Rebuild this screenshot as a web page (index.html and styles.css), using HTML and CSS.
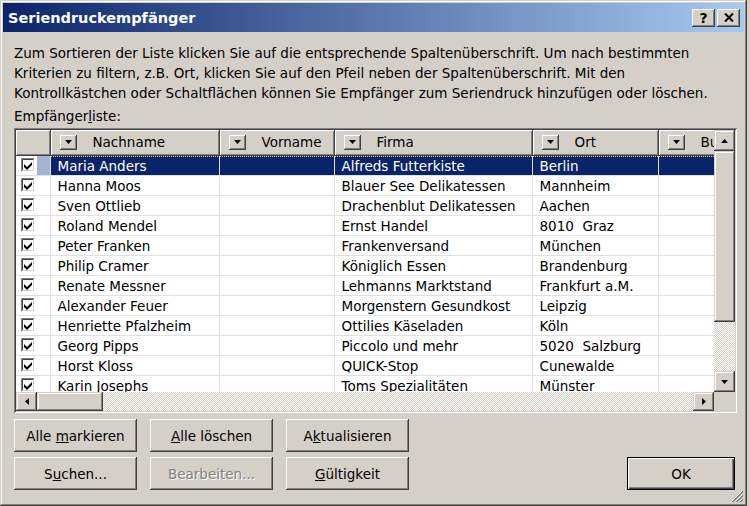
FILE: index.html
```html
<!DOCTYPE html>
<html lang="de">
<head>
  <meta charset="UTF-8">
  <meta name="viewport" content="width=device-width, initial-scale=1.0">
  <title>Seriendruckempfänger</title>
  <link rel="stylesheet" href="styles.css">
</head>
<body>
  <svg class="defs" width="0" height="0" aria-hidden="true">
    <symbol id="check" viewBox="0 0 14 14">
      <rect width="14" height="14" fill="#fff"/>
      <path d="M0.5 13.5V0.5H13.5" fill="none" stroke="#808080"/>
      <path d="M1.5 12.5V1.5H12.5" fill="none" stroke="#404040"/>
      <path d="M0.5 13.5H13.5V0.5" fill="none" stroke="#fff"/>
      <path d="M1.5 12.5H12.5V1.5" fill="none" stroke="#d4d0c8"/>
      <path d="M3 6l3 3l5-5v3l-5 5l-3-3z" fill="#000"/>
    </symbol>
    <symbol id="down" viewBox="0 0 7 4"><path d="M0 0h7l-3.5 4z" fill="#000"/></symbol>
    <symbol id="up" viewBox="0 0 7 4"><path d="M0 4h7l-3.5-4z" fill="#000"/></symbol>
    <symbol id="left" viewBox="0 0 4 7"><path d="M4 0v7l-4-3.5z" fill="#000"/></symbol>
    <symbol id="right" viewBox="0 0 4 7"><path d="M0 0v7l4-3.5z" fill="#000"/></symbol>
  </svg>

  <div class="window">
    <div class="titlebar">
      <span class="title">Seriendruckempfänger</span>
      <div class="caption-buttons">
        <button class="caption-btn">?</button>
        <button class="caption-btn">
          <svg width="10" height="9" viewBox="0 0 10 9"><path d="M1 0.5l8 8M9 0.5l-8 8" stroke="#000" stroke-width="2"/></svg>
        </button>
      </div>
    </div>

    <div class="dialog-body">
      <p class="intro">Zum Sortieren der Liste klicken Sie auf die entsprechende Spaltenüberschrift. Um nach bestimmten<br>Kriterien zu filtern, z.B. Ort, klicken Sie auf den Pfeil neben der Spaltenüberschrift. Mit den<br>Kontrollkästchen oder Schaltflächen können Sie Empfänger zum Seriendruck hinzufügen oder löschen.</p>
      <div class="list-label">Empfänger<u>l</u>iste:</div>

      <div class="listview">
        <div class="list-grid">
          <table class="recipients">
            <colgroup>
              <col class="c-check"><col class="c-name"><col class="c-first"><col class="c-company"><col class="c-city"><col class="c-state">
            </colgroup>
            <thead>
              <tr>
                <th></th>
                <th><div class="head"><span class="drop"><svg width="7" height="4"><use href="#down"/></svg></span>Nachname</div></th>
                <th><div class="head"><span class="drop"><svg width="7" height="4"><use href="#down"/></svg></span>Vorname</div></th>
                <th><div class="head"><span class="drop"><svg width="7" height="4"><use href="#down"/></svg></span>Firma</div></th>
                <th><div class="head"><span class="drop"><svg width="7" height="4"><use href="#down"/></svg></span>Ort</div></th>
                <th><div class="head"><span class="drop"><svg width="7" height="4"><use href="#down"/></svg></span>Bu</div></th>
              </tr>
            </thead>
            <tbody>
              <tr class="selected">
                <td class="check"><svg width="14" height="14"><use href="#check"/></svg></td>
                <td>Maria Anders</td><td></td><td>Alfreds Futterkiste</td><td>Berlin</td><td></td>
              </tr>
              <tr>
                <td class="check"><svg width="14" height="14"><use href="#check"/></svg></td>
                <td>Hanna Moos</td><td></td><td>Blauer See Delikatessen</td><td>Mannheim</td><td></td>
              </tr>
              <tr>
                <td class="check"><svg width="14" height="14"><use href="#check"/></svg></td>
                <td>Sven Ottlieb</td><td></td><td>Drachenblut Delikatessen</td><td>Aachen</td><td></td>
              </tr>
              <tr>
                <td class="check"><svg width="14" height="14"><use href="#check"/></svg></td>
                <td>Roland Mendel</td><td></td><td>Ernst Handel</td><td>8010&nbsp; Graz</td><td></td>
              </tr>
              <tr>
                <td class="check"><svg width="14" height="14"><use href="#check"/></svg></td>
                <td>Peter Franken</td><td></td><td>Frankenversand</td><td>München</td><td></td>
              </tr>
              <tr>
                <td class="check"><svg width="14" height="14"><use href="#check"/></svg></td>
                <td>Philip Cramer</td><td></td><td>Königlich Essen</td><td>Brandenburg</td><td></td>
              </tr>
              <tr>
                <td class="check"><svg width="14" height="14"><use href="#check"/></svg></td>
                <td>Renate Messner</td><td></td><td>Lehmanns Marktstand</td><td>Frankfurt a.M.</td><td></td>
              </tr>
              <tr>
                <td class="check"><svg width="14" height="14"><use href="#check"/></svg></td>
                <td>Alexander Feuer</td><td></td><td>Morgenstern Gesundkost</td><td>Leipzig</td><td></td>
              </tr>
              <tr>
                <td class="check"><svg width="14" height="14"><use href="#check"/></svg></td>
                <td>Henriette Pfalzheim</td><td></td><td>Ottilies Käseladen</td><td>Köln</td><td></td>
              </tr>
              <tr>
                <td class="check"><svg width="14" height="14"><use href="#check"/></svg></td>
                <td>Georg Pipps</td><td></td><td>Piccolo und mehr</td><td>5020&nbsp; Salzburg</td><td></td>
              </tr>
              <tr>
                <td class="check"><svg width="14" height="14"><use href="#check"/></svg></td>
                <td>Horst Kloss</td><td></td><td>QUICK-Stop</td><td>Cunewalde</td><td></td>
              </tr>
              <tr>
                <td class="check"><svg width="14" height="14"><use href="#check"/></svg></td>
                <td>Karin Josephs</td><td></td><td>Toms Spezialitäten</td><td>Münster</td><td></td>
              </tr>
            </tbody>
          </table>
        </div>

        <div class="vscroll">
          <div class="sb-btn"><svg width="7" height="4"><use href="#up"/></svg></div>
          <div class="sb-thumb v"></div>
          <div class="sb-track"></div>
          <div class="sb-btn"><svg width="7" height="4"><use href="#down"/></svg></div>
        </div>

        <div class="hscroll">
          <div class="sb-btn"><svg width="4" height="7"><use href="#left"/></svg></div>
          <div class="sb-thumb h"></div>
          <div class="sb-track"></div>
          <div class="sb-btn"><svg width="4" height="7"><use href="#right"/></svg></div>
        </div>
        <div class="corner"></div>
      </div>

      <div class="actions">
        <div class="button-grid">
          <button class="btn">Alle <u>m</u>arkieren</button>
          <button class="btn"><u>A</u>lle löschen</button>
          <button class="btn">A<u>k</u>tualisieren</button>
          <button class="btn">S<u>u</u>chen...</button>
          <button class="btn" disabled>Bearbeiten...</button>
          <button class="btn"><u>G</u>ültigkeit</button>
        </div>
        <button class="btn default">OK</button>
      </div>
    </div>

    <svg class="grip" width="12" height="12" viewBox="0 0 12 12">
      <path d="M11 1L1 11M11 5L5 11M11 9L9 11" stroke="#fff"/>
      <path d="M12 1L1 12M12 2L2 12M12 5L5 12M12 6L6 12M12 9L9 12M12 10L10 12" stroke="#808080"/>
    </svg>
  </div>
</body>
</html>
```

FILE: styles.css
```css
* {
  box-sizing: border-box;
}

body {
  margin: 0;
  background: #d4d0c8;
  font-family: "DejaVu Sans", Tahoma, sans-serif;
  font-size: 13.5px;
  color: #000;
}

.defs {
  position: absolute;
}

button {
  font: inherit;
  color: inherit;
}

.window {
  position: relative;
  display: flex;
  flex-direction: column;
  width: 747px;
  height: 506px;
  padding: 3px 3px 4px 3px;
  background: #d4d0c8;
  box-shadow: inset -1px -1px #404040, inset 1px 1px #d4d0c8,
    inset -2px -2px #808080, inset 2px 2px #fff;
}

/* title bar */
.titlebar {
  display: flex;
  align-items: center;
  height: 29px;
  padding: 0 4px 0 5px;
  background: linear-gradient(to right, #0a246a, #a6caf0);
}

.title {
  flex: 1;
  color: #fff;
  font-weight: bold;
  font-size: 14.5px;
}

.caption-buttons {
  display: flex;
  gap: 2px;
}

.caption-btn {
  display: grid;
  place-items: center;
  width: 23px;
  height: 18px;
  padding: 0;
  border: 0;
  background: #d4d0c8;
  font-weight: bold;
  font-size: 14px;
  line-height: 1;
  box-shadow: inset -1px -1px #404040, inset 1px 1px #fff, inset -2px -2px #808080;
}

/* body */
.dialog-body {
  display: flex;
  flex-direction: column;
  padding: 0 7px 0 11px;
}

.intro {
  margin: 11px 0 0;
  line-height: 20px;
  white-space: nowrap;
}

.list-label {
  margin-top: 3px;
  line-height: 20px;
}

/* list view */
.listview {
  display: grid;
  grid-template-columns: 1fr 21px;
  grid-template-rows: 1fr 19px;
  width: 723px;
  height: 285px;
  margin-top: 2px;
  padding: 2px;
  background: #fff;
  box-shadow: inset 1px 1px #808080, inset -1px -1px #fff,
    inset 2px 2px #404040, inset -2px -2px #d4d0c8;
}

.list-grid {
  overflow: hidden;
  background: #fff;
}

.recipients {
  width: 762px;
  border-collapse: collapse;
  table-layout: fixed;
}

.c-check { width: 34px; }
.c-name { width: 169px; }
.c-first { width: 115px; }
.c-company { width: 198px; }
.c-city { width: 126px; }
.c-state { width: 120px; }

.recipients th {
  height: 25px;
  padding: 0;
  font-weight: normal;
  text-align: left;
  white-space: nowrap;
  background: #d4d0c8;
  border-right: 1px solid #404040;
  border-bottom: 1px solid #404040;
  box-shadow: inset 1px 1px #fff, inset -1px -1px #808080;
}

.head {
  display: flex;
  align-items: center;
  gap: 16px;
  padding-left: 9px;
}

.drop {
  display: grid;
  place-items: center;
  flex: none;
  width: 17px;
  height: 15px;
  background: #d4d0c8;
  box-shadow: inset -1px -1px #404040, inset 1px 1px #fff, inset -2px -2px #808080;
}

.drop svg,
.sb-btn svg {
  display: block;
}

.recipients td {
  height: 20px;
  padding: 2px 0 0 7px;
  line-height: 17px;
  white-space: nowrap;
  overflow: hidden;
  border-right: 1px solid #e0dfe3;
  border-bottom: 1px solid #e0dfe3;
}

.recipients td.check {
  padding: 0 0 0 5px;
}

.check svg {
  display: block;
}

.selected td {
  color: #fff;
  background: repeating-linear-gradient(to right, #e8c870 0 1px, transparent 1px 2px) top / 100% 1px no-repeat, #0a246a;
}

.selected td.check {
  background: linear-gradient(to right, #fff 21px, #a5b2d3 21px);
}

/* scroll bars */
.vscroll,
.hscroll {
  display: flex;
  background-color: #fff;
  background-image: repeating-conic-gradient(#d4d0c8 0 25%, #fff 0 50%);
  background-size: 2px 2px;
}

.vscroll {
  flex-direction: column;
}

.sb-btn,
.sb-thumb {
  flex: none;
  background: #d4d0c8;
  box-shadow: inset -1px -1px #404040, inset 1px 1px #d4d0c8,
    inset -2px -2px #808080, inset 2px 2px #fff;
}

.sb-btn {
  display: grid;
  place-items: center;
}

.vscroll .sb-btn {
  height: 21px;
}

.hscroll .sb-btn {
  width: 21px;
}

.sb-thumb.v {
  height: 171px;
}

.sb-thumb.h {
  width: 66px;
}

.sb-track {
  flex: 1;
}

.corner {
  background: #d4d0c8;
}

/* buttons */
.actions {
  display: flex;
  align-items: flex-end;
  margin-top: 6px;
}

.button-grid {
  display: grid;
  grid-template-columns: repeat(3, 123px);
  grid-auto-rows: 33px;
  column-gap: 13px;
  row-gap: 5px;
}

.btn {
  padding: 0;
  border: 0;
  background: #d4d0c8;
  box-shadow: inset -1px -1px #404040, inset 1px 1px #fff, inset -2px -2px #808080;
}

.btn:disabled {
  color: #808080;
  text-shadow: 1px 1px #fff;
}

.btn.default {
  width: 108px;
  height: 33px;
  margin: 0 2px 0 auto;
  box-shadow: inset 0 0 0 1px #000, inset 2px 2px #fff,
    inset -2px -2px #404040, inset -3px -3px #808080;
}

.grip {
  position: absolute;
  right: 4px;
  bottom: 4px;
}
```
